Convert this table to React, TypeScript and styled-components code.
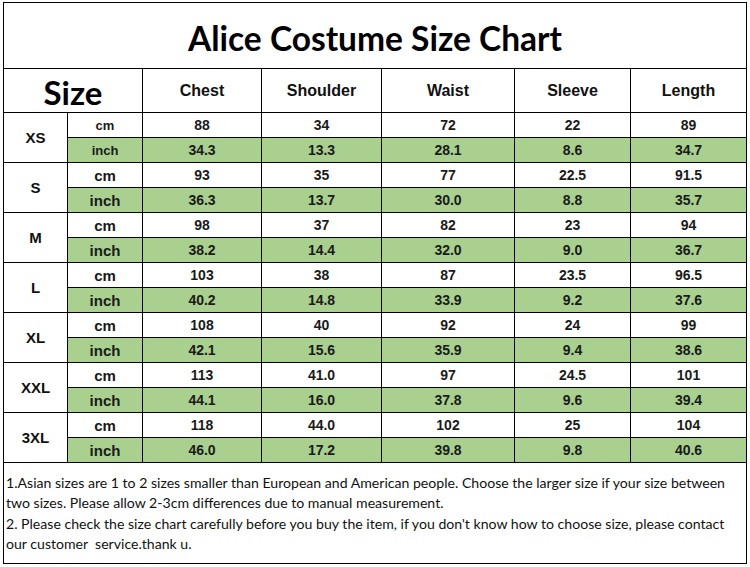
import React from "react";
import styled, { createGlobalStyle } from "styled-components";

const Global = createGlobalStyle`
  html, body { margin: 0; padding: 0; background: #fff; }
  body { width: 750px; height: 567px; overflow: hidden; }
`;

const Page = styled.div`
  padding: 2px 0 0 3px;
`;

const Grid = styled.div`
  display: grid;
  grid-template-columns: 63px 74px 118px 119px 132px 115px 115px;
  grid-template-rows: 65px 43px repeat(14, 24px) 100px;
  gap: 1px;
  padding: 1px;
  background: #000;
  width: max-content;
`;

const Title = styled.div`
  grid-column: 1 / -1;
  background: #fff;
  display: flex;
  align-items: center;
  justify-content: center;
  font-family: Lato, "Liberation Sans", sans-serif;
  font-weight: 700;
  font-size: 33.5px;
  color: #000;
  padding-top: 4px;
`;

const SizeHead = styled.div`
  grid-column: 1 / 3;
  background: #fff;
  display: flex;
  align-items: center;
  justify-content: center;
  font-family: Lato, "Liberation Sans", sans-serif;
  font-weight: 700;
  font-size: 33px;
  padding-top: 2px;
  color: #000;
`;

const ColHead = styled.div`
  background: #fff;
  display: flex;
  align-items: center;
  justify-content: center;
  font-family: "Liberation Sans", Arial, sans-serif;
  font-weight: 700;
  font-size: 16px;
  color: #111;
`;

const SizeLabel = styled.div`
  grid-row: span 2;
  background: #fff;
  display: flex;
  align-items: center;
  justify-content: center;
  font-family: "Liberation Sans", Arial, sans-serif;
  font-weight: 700;
  font-size: 15px;
  color: #111;
`;

const Cell = styled.div<{ $green?: boolean; $unit?: boolean; $small?: boolean }>`
  background: ${(p) => (p.$green ? "#a9d08e" : "#fff")};
  display: flex;
  align-items: center;
  justify-content: center;
  font-family: "Liberation Sans", Arial, sans-serif;
  font-weight: 700;
  font-size: ${(p) => (p.$unit ? (p.$small ? "13px" : "15px") : "14px")};
  color: #1a1a1a;
`;

const Notes = styled.div`
  grid-column: 1 / -1;
  background: #fff;
  font-family: Lato, "Open Sans", sans-serif;
  font-size: 14.1px;
  line-height: 20.3px;
  color: #111;
  padding: 10px 4px 0 2px;
  white-space: pre-wrap;
`;

type Row = { size: string; cm: string[]; inch: string[] };

const rows: Row[] = [
  { size: "XS", cm: ["88", "34", "72", "22", "89"], inch: ["34.3", "13.3", "28.1", "8.6", "34.7"] },
  { size: "S", cm: ["93", "35", "77", "22.5", "91.5"], inch: ["36.3", "13.7", "30.0", "8.8", "35.7"] },
  { size: "M", cm: ["98", "37", "82", "23", "94"], inch: ["38.2", "14.4", "32.0", "9.0", "36.7"] },
  { size: "L", cm: ["103", "38", "87", "23.5", "96.5"], inch: ["40.2", "14.8", "33.9", "9.2", "37.6"] },
  { size: "XL", cm: ["108", "40", "92", "24", "99"], inch: ["42.1", "15.6", "35.9", "9.4", "38.6"] },
  { size: "XXL", cm: ["113", "41.0", "97", "24.5", "101"], inch: ["44.1", "16.0", "37.8", "9.6", "39.4"] },
  { size: "3XL", cm: ["118", "44.0", "102", "25", "104"], inch: ["46.0", "17.2", "39.8", "9.8", "40.6"] },
];

const heads = ["Chest", "Shoulder", "Waist", "Sleeve", "Length"];

export default function App() {
  return (
    <>
      <Global />
      <Page>
        <Grid>
          <Title>Alice Costume Size Chart</Title>
          <SizeHead>Size</SizeHead>
          {heads.map((h) => (
            <ColHead key={h}>{h}</ColHead>
          ))}
          {rows.map((r, i) => (
            <React.Fragment key={r.size}>
              <SizeLabel>{r.size}</SizeLabel>
              <Cell $unit $small={i === 0}>cm</Cell>
              {r.cm.map((v, j) => (
                <Cell key={"c" + j}>{v}</Cell>
              ))}
              <Cell $unit $green $small={i === 0}>inch</Cell>
              {r.inch.map((v, j) => (
                <Cell key={"i" + j} $green>{v}</Cell>
              ))}
            </React.Fragment>
          ))}
          <Notes>
            {"1.Asian sizes are 1 to 2 sizes smaller than European and American people. Choose the larger size if your size between two sizes. Please allow 2-3cm differences due to manual measurement.\n2. Please check the size chart carefully before you buy the item, if you don't know how to choose size, please contact our customer  service.thank u."}
          </Notes>
        </Grid>
      </Page>
    </>
  );
}
